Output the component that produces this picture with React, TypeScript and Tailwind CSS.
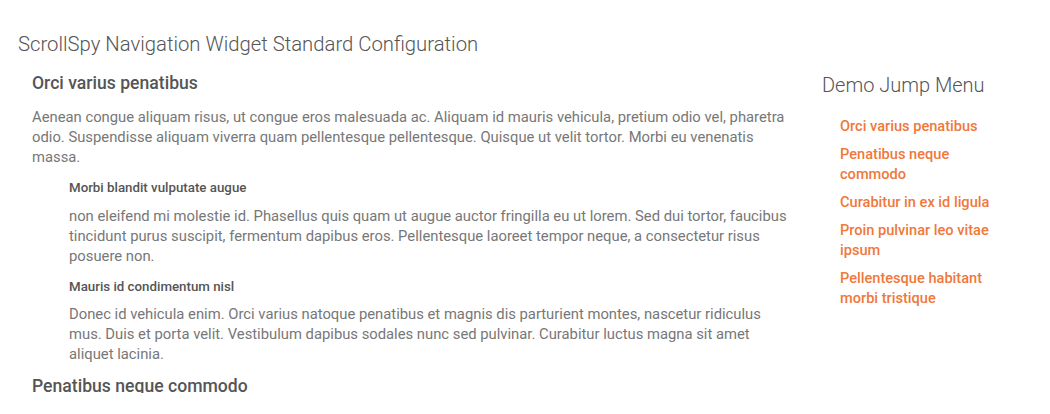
const sections = [
  'Orci varius penatibus',
  'Penatibus neque commodo',
  'Curabitur in ex id ligula',
  'Proin pulvinar leo vitae ipsum',
  'Pellentesque habitant morbi tristique',
]

export default function App() {
  return (
    <div className="h-[414px] bg-white">
      <div
        className="h-[393px] overflow-hidden px-[18px] pt-[32px]"
        style={{ fontFamily: 'Roboto, "Liberation Sans", sans-serif' }}
      >
        <h1 className="text-[20.3px] leading-[24px] font-light text-[#555]">
          ScrollSpy Navigation Widget Standard Configuration
        </h1>

        <div className="flex">
          {/* main content */}
          <div className="ml-[14px] w-[756px] shrink-0 pt-[15px]">
            <h2 className="text-[17.6px] leading-[24px] font-medium text-[#555]">Orci varius penatibus</h2>
            <p className="mt-[12px] text-[14.8px] leading-[20px] text-[#777]">
              Aenean congue aliquam risus, ut congue eros malesuada ac. Aliquam id mauris vehicula, pretium odio vel,
              pharetra odio. Suspendisse aliquam viverra quam pellentesque pellentesque. Quisque ut velit tortor. Morbi
              eu venenatis massa.
            </p>

            <div className="pl-[37px]">
              <h3 className="mt-[12px] text-[13.3px] leading-[18px] font-medium text-[#555]">
                Morbi blandit vulputate augue
              </h3>
              <p className="mt-[9px] text-[14.8px] leading-[20px] text-[#777]">
                non eleifend mi molestie id. Phasellus quis quam ut augue auctor fringilla eu ut lorem. Sed dui tortor,
                faucibus tincidunt purus suscipit, fermentum dapibus eros. Pellentesque laoreet tempor neque, a
                consectetur risus posuere non.
              </p>

              <h3 className="mt-[12px] text-[13.3px] leading-[18px] font-medium text-[#555]">
                Mauris id condimentum nisl
              </h3>
              <p className="mt-[8px] text-[14.8px] leading-[20px] text-[#777]">
                Donec id vehicula enim. Orci varius natoque penatibus et magnis dis parturient montes, nascetur
                ridiculus mus. Duis et porta velit. Vestibulum dapibus sodales nunc sed pulvinar. Curabitur luctus magna
                sit amet aliquet lacinia.
              </p>
            </div>

            <h2 className="mt-[10px] text-[17.6px] leading-[24px] font-medium text-[#555]">Penatibus neque commodo</h2>
          </div>

          {/* jump menu */}
          <div className="ml-[34px] pt-[17px]">
            <h4 className="text-[20px] leading-[24px] font-light text-[#555]">Demo Jump Menu</h4>
            <ul className="mt-[19px] w-[175px] pl-[18px] space-y-[8px]">
              {sections.map(s => (
                <li key={s} className="leading-[20px]">
                  <a href="#" className="text-[14.6px] leading-[20px] font-medium text-[#f0783a]">
                    {s}
                  </a>
                </li>
              ))}
            </ul>
          </div>
        </div>
      </div>
    </div>
  )
}
